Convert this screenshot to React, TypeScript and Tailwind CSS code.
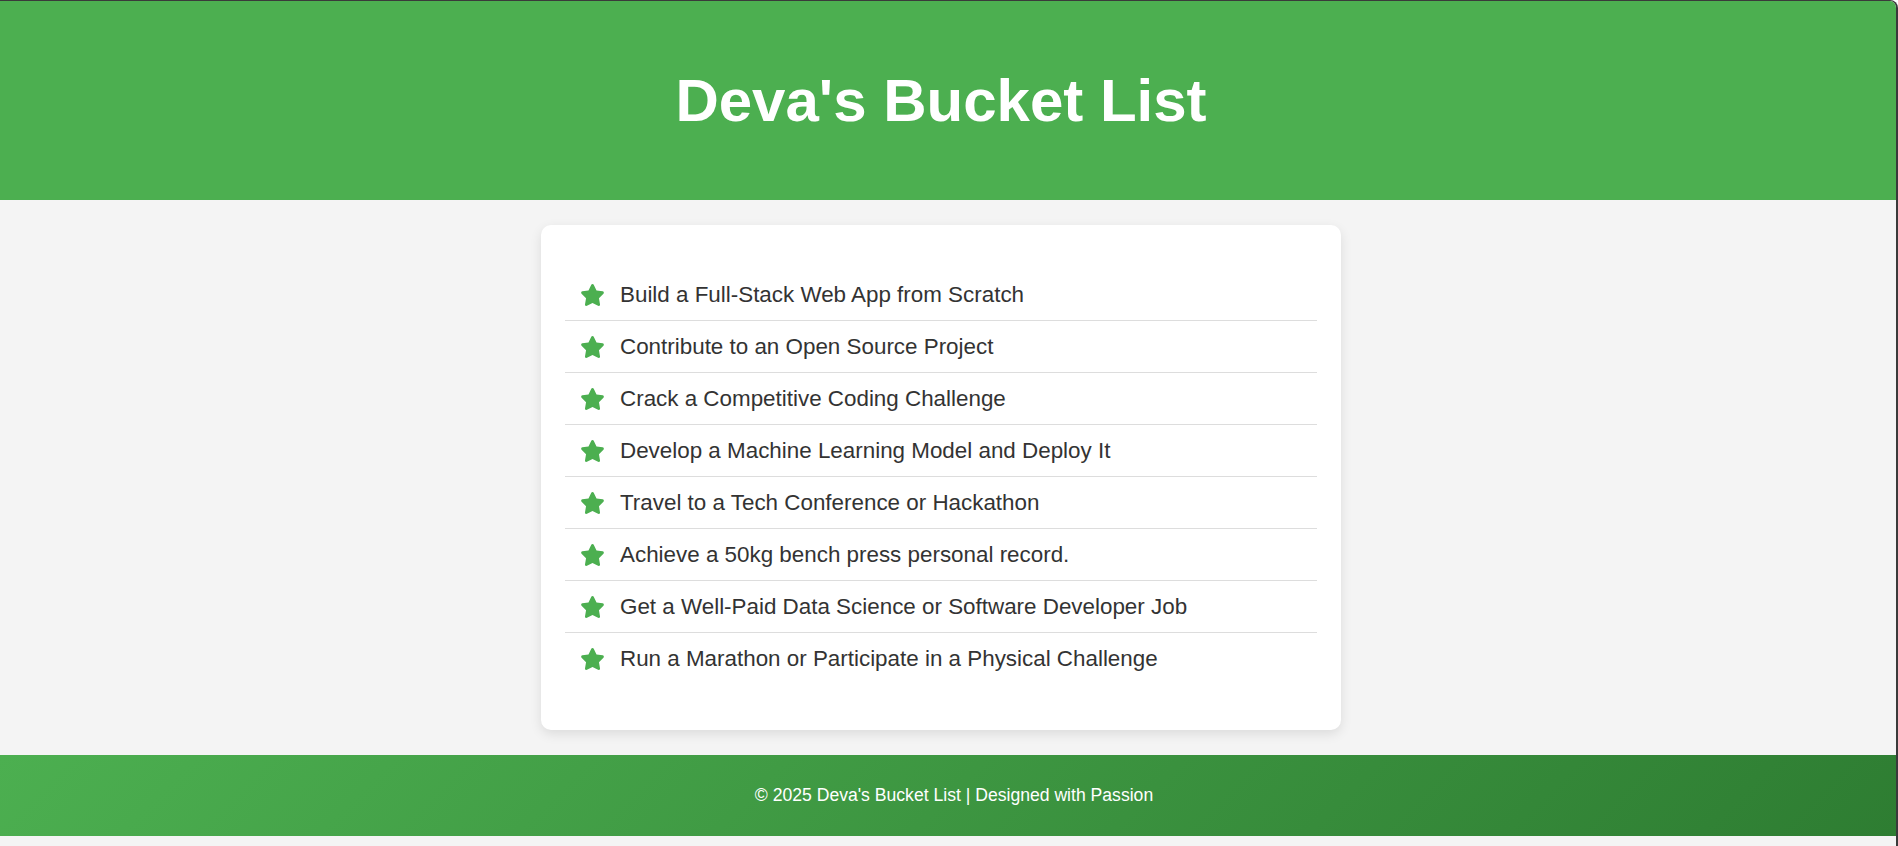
const goals = [
  "Build a Full-Stack Web App from Scratch",
  "Contribute to an Open Source Project",
  "Crack a Competitive Coding Challenge",
  "Develop a Machine Learning Model and Deploy It",
  "Travel to a Tech Conference or Hackathon",
  "Achieve a 50kg bench press personal record.",
  "Get a Well-Paid Data Science or Software Developer Job",
  "Run a Marathon or Participate in a Physical Challenge",
];

function Star() {
  return (
    <svg viewBox="0 0 576 512" className="w-[25px] h-[22px] shrink-0 fill-[#4CAF50]">
      <path d="M316.9 18C311.6 7 300.4 0 288.1 0s-23.4 7-28.8 18L195 150.3 51.4 171.5c-12 1.8-22 10.2-25.7 21.7s-.7 24.2 7.9 32.7L137.8 329 113.2 474.7c-2 12 3 24.2 12.9 31.3s23 8 33.8 2.3l128.3-68.5 128.3 68.5c10.8 5.7 23.9 4.9 33.8-2.3s14.9-19.3 12.9-31.3L438.5 329 542.7 225.9c8.6-8.5 11.7-21.2 7.9-32.7s-13.7-19.9-25.7-21.7L381.2 150.3 316.9 18z" />
    </svg>
  );
}

export default function App() {
  return (
    <div className="min-h-screen bg-[#f4f4f4] border-t border-r-2 border-[#3a3a3a] rounded-tr-lg overflow-hidden font-['Liberation_Sans',Arial,sans-serif]">
      {/* Cabecera */}
      <header className="h-[199px] bg-[#4CAF50] flex items-center justify-center pr-[14px]">
        <h1 className="text-[60px] font-bold text-white leading-none">Deva's Bucket List</h1>
      </header>

      {/* Tarjeta */}
      <main className="flex justify-center py-[25px] pr-[14px]">
        <div className="w-[800px] bg-white rounded-[10px] shadow-[0_4px_12px_rgba(0,0,0,0.1)] px-6 pt-[44px] pb-[46px]">
          <ul>
            {goals.map((g, i) => (
              <li
                key={g}
                className={`flex items-center gap-[15px] px-[15px] py-3 text-[22.4px] leading-[27px] text-[#333] ${
                  i < goals.length - 1 ? "border-b border-[#ddd]" : ""
                }`}
              >
                <Star />
                <span>{g}</span>
              </li>
            ))}
          </ul>
        </div>
      </main>

      {/* Pie */}
      <footer className="h-[81px] flex items-center justify-center pl-[12px] bg-[linear-gradient(135deg,#4CAF50,#2E7D32)]">
        <p className="text-[17.6px] text-white">© 2025 Deva's Bucket List | Designed with Passion</p>
      </footer>
    </div>
  );
}
